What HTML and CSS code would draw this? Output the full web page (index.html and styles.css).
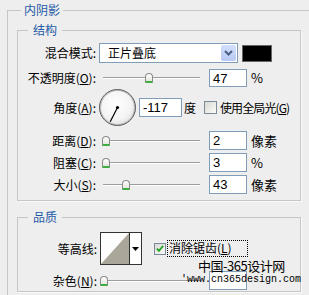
FILE: index.html
```html
<!DOCTYPE html>
<html>

<head>
    <title>内阴影</title>
    <meta charset=utf-8>
    <meta name=viewport content="width=device-width, initial-scale=1">
    <link rel="stylesheet" href="styles.css">
</head>

<body>
    <fieldset class="group outer">
        <legend>内阴影</legend>

        <fieldset class="group sub structure">
            <legend>结构</legend>

            <div class="row r-blend">
                <span class="lbl">混合模式:</span>
                <div class="select">
                    <span class="select-text">正片叠底</span>
                    <span class="select-btn">
                        <svg width="9" height="6" viewBox="0 0 9 6"><path d="M1 1 L4.5 4.5 L8 1" fill="none" stroke="#4d6185" stroke-width="2"/></svg>
                    </span>
                </div>
                <span class="swatch"></span>
            </div>

            <div class="row r-opacity">
                <span class="lbl">不透明度(<u>O</u>):</span>
                <div class="slider"><span class="track"></span><span class="thumb" style="left:46px"></span></div>
                <span class="field">47</span>
                <span class="unit">%</span>
            </div>

            <div class="row r-angle">
                <span class="lbl">角度(<u>A</u>):</span>
                <div class="dial">
                    <svg width="37" height="37" viewBox="0 0 37 37">
                        <line x1="18.5" y1="18.5" x2="11.2" y2="32.8" stroke="#000" stroke-width="1.2"/>
                        <circle cx="18.5" cy="18.5" r="1.6" fill="#000"/>
                    </svg>
                </div>
                <span class="field wide">-117</span>
                <span class="unit deg">度</span>
                <span class="check"></span>
                <span class="check-text">使用全局光(<u>G</u>)</span>
            </div>

            <div class="row r-first">
                <span class="lbl">距离(<u>D</u>):</span>
                <div class="slider"><span class="track"></span><span class="thumb" style="left:3px"></span></div>
                <span class="field">2</span>
                <span class="unit">像素</span>
            </div>

            <div class="row">
                <span class="lbl">阻塞(<u>C</u>):</span>
                <div class="slider"><span class="track"></span><span class="thumb" style="left:3px"></span></div>
                <span class="field">3</span>
                <span class="unit">%</span>
            </div>

            <div class="row">
                <span class="lbl">大小(<u>S</u>):</span>
                <div class="slider"><span class="track"></span><span class="thumb" style="left:23px"></span></div>
                <span class="field">43</span>
                <span class="unit">像素</span>
            </div>
        </fieldset>

        <fieldset class="group sub quality">
            <legend>品质</legend>

            <div class="row r-contour">
                <span class="lbl">等高线:</span>
                <div class="contour">
                    <span class="contour-preview">
                        <svg width="28" height="31" viewBox="0 0 28 31"><polygon points="0,31 28,0 28,31" fill="#aaa699"/></svg>
                    </span>
                    <span class="contour-btn">
                        <svg width="7" height="4" viewBox="0 0 7 4"><polygon points="0,0 7,0 3.5,4" fill="#000"/></svg>
                    </span>
                </div>
                <span class="check on">
                    <svg width="11" height="11" viewBox="0 0 11 11"><path d="M2 5.5 L4.3 8 L9 2.5" fill="none" stroke="#21a121" stroke-width="2"/></svg>
                </span>
                <span class="check-text focus">消除锯齿(<u>L</u>)</span>
            </div>

            <div class="row r-noise">
                <span class="lbl">杂色(<u>N</u>):</span>
                <div class="slider"><span class="track"></span><span class="thumb" style="left:3px"></span></div>
                <span class="field"></span>
            </div>
        </fieldset>
    </fieldset>

    <div class="mark">
        <div class="mark-cn">中国-365设计网</div>
        <div class="mark-url">'www.cn365design.com</div>
    </div>
</body>

</html>
```

FILE: styles.css
```css
html, body {
    margin: 0;
    height: 100%;
    overflow: hidden;
}

body {
    background: #eeeeee;
    font-family: "Noto Sans CJK SC", "Liberation Sans", sans-serif;
    font-size: 12px;
    line-height: 14px;
    color: #000;
    position: relative;
}

u {
    text-decoration: underline;
    text-underline-offset: 1px;
}

/* group boxes */
.group {
    border: 1px solid #c6c6c6;
    box-shadow: 1px 1px 0 #fafafa;
    padding: 0;
    min-width: 0;
}

.group legend {
    color: #1f5aa6;
    line-height: 14px;
    padding: 0 4px;
}

.outer {
    margin: 3px 0 0 7px;
    width: 302px;
    height: 292px;
    box-sizing: border-box;
    border-right: none;
    border-bottom: none;
    box-shadow: none;
}

.outer > legend {
    margin-left: 13px;
    padding: 0 3px;
}

.sub {
    margin: 6px 0 0 9px;
    width: 284px;
    box-sizing: border-box;
}

.sub > legend {
    margin-left: 10px;
    padding: 0 5px;
}

.structure {
    padding: 6px 0 6px 0;
}

.quality {
    margin-top: 9px;
    padding: 8px 0 1px 0;
}

/* rows */
.row {
    display: flex;
    align-items: center;
    height: 19px;
    margin-top: 3px;
}

.lbl {
    width: 78px;
    text-align: right;
    margin-right: 3px;
    white-space: nowrap;
}

.quality .lbl {
    width: 79px;
    margin-right: 0;
}

.r-blend {
    height: 20px;
    margin-top: 0;
}

.r-opacity {
    margin-top: 5px;
}

.r-angle {
    height: 37px;
    margin-top: 2px;
}

.r-first {
    margin-top: 5px;
}

.r-contour {
    height: 33px;
    margin-top: 0;
}

.r-noise {
    margin-top: 6px;
}

/* blend select */
.select {
    width: 139px;
    height: 20px;
    box-sizing: border-box;
    border: 1px solid #7f9db9;
    background: #fff;
    display: flex;
    align-items: center;
    justify-content: space-between;
}

.select-text {
    padding-left: 8px;
}

.select-btn {
    width: 15px;
    height: 16px;
    margin-right: 1px;
    background: linear-gradient(#d3defb, #b7c9f3);
    border-radius: 2px;
    display: flex;
    align-items: center;
    justify-content: center;
}

.swatch {
    width: 30px;
    height: 17px;
    margin-left: 4px;
    box-sizing: border-box;
    background: #000;
    border: 1px solid #666;
}

/* sliders */
.slider {
    width: 101px;
    height: 12px;
    position: relative;
}

.quality .slider {
    width: 103px;
}

.track {
    position: absolute;
    left: 4px;
    right: 0;
    top: 5px;
    border-top: 1px solid #9d9d9d;
    border-bottom: 1px solid #fff;
}

.thumb {
    position: absolute;
    top: 1px;
    width: 8px;
    height: 10px;
    box-sizing: border-box;
    border: 1px solid #8a8a8a;
    border-bottom: 2px solid #3fae3f;
    border-radius: 4px 4px 1px 1px;
    background: linear-gradient(#fff, #e6e6e0);
}

.field {
    width: 38px;
    height: 19px;
    box-sizing: border-box;
    margin-left: 9px;
    border: 1px solid #7f9db9;
    background: #fff;
    padding: 1px 0 0 3px;
    font-family: "Liberation Sans", sans-serif;
    font-size: 13px;
    line-height: 16px;
}

.r-opacity .field {
    height: 18px;
}

.field.wide {
    width: 43px;
    margin-left: 3px;
}

.unit {
    margin-left: 4px;
    font-size: 13px;
}

.unit.deg {
    margin-left: 2px;
    font-size: 12px;
}

/* angle dial */
.dial {
    width: 37px;
    height: 37px;
    box-sizing: border-box;
    border: 1px solid #5a5a5a;
    border-radius: 50%;
    background: radial-gradient(circle at 45% 40%, #fff 0%, #f3f3f3 55%, #cfcfcf 100%);
    box-shadow: inset 0 0 0 1px #b8b8b8;
    position: relative;
}

.dial svg {
    position: absolute;
    left: -1px;
    top: -1px;
}

/* checkboxes */
.check {
    width: 13px;
    height: 13px;
    box-sizing: border-box;
    margin-left: 8px;
    border: 1px solid #7a8a99;
    background: linear-gradient(135deg, #d9d9d4, #fafaf8);
    display: flex;
    align-items: center;
    justify-content: center;
}

.check.on {
    width: 12px;
    height: 12px;
    margin-left: 12px;
}

.check-text {
    margin-left: 3px;
    white-space: nowrap;
    letter-spacing: -0.9px;
}

.check-text.focus {
    margin-left: 1px;
    padding: 0 1px;
    width: 77px;
    height: 15px;
    border: 1px dotted #000;
    letter-spacing: 0;
}

/* contour picker */
.contour {
    margin-left: 3px;
    width: 42px;
    height: 33px;
    box-sizing: border-box;
    border: 1px solid #333;
    display: flex;
    background: #fff;
}

.contour-preview {
    width: 28px;
    height: 31px;
    background: #fdfdfd;
}

.contour-preview svg {
    display: block;
}

.contour-btn {
    flex: 1;
    border-left: 1px solid #333;
    display: flex;
    align-items: center;
    justify-content: center;
}

/* watermark */
.mark {
    position: absolute;
    left: 181px;
    top: 258px;
}

.mark-cn {
    margin-left: 17px;
    font-size: 13px;
    line-height: 16px;
    letter-spacing: -0.5px;
}

.mark-url {
    font-family: "Liberation Mono", monospace;
    font-size: 10px;
    line-height: 12px;
}
```
